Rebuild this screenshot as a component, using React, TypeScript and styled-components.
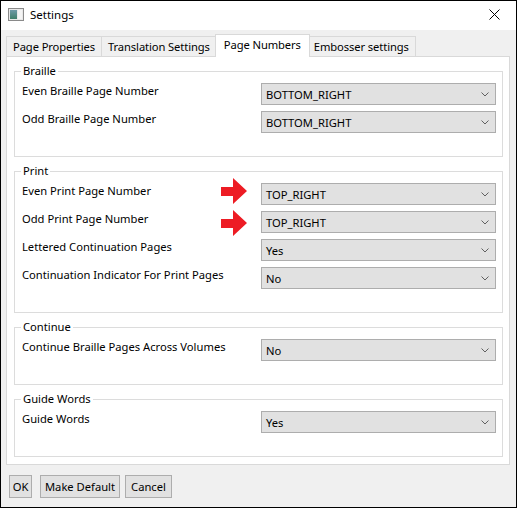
import React from 'react';
import styled, { createGlobalStyle } from 'styled-components';

const GlobalStyle = createGlobalStyle`
  html, body { margin: 0; padding: 0; background: #ffffff; }
  * { box-sizing: border-box; }
  body { font-family: "Segoe UI", "Noto Sans", "Open Sans", sans-serif; font-size: 11.2px; color: #000; }
`;

type Row = { label: string; value: string; arrow?: number };
type Group = { title: string; rows: Row[] };

const GROUPS: Group[] = [
  {
    title: 'Braille',
    rows: [
      { label: 'Even Braille Page Number', value: 'BOTTOM_RIGHT' },
      { label: 'Odd Braille Page Number', value: 'BOTTOM_RIGHT' },
    ],
  },
  {
    title: 'Print',
    rows: [
      { label: 'Even Print Page Number', value: 'TOP_RIGHT', arrow: -5 },
      { label: 'Odd Print Page Number', value: 'TOP_RIGHT', arrow: -1 },
      { label: 'Lettered Continuation Pages', value: 'Yes' },
      { label: 'Continuation Indicator For Print Pages', value: 'No' },
    ],
  },
  {
    title: 'Continue',
    rows: [{ label: 'Continue Braille Pages Across Volumes', value: 'No' }],
  },
  {
    title: 'Guide Words',
    rows: [{ label: 'Guide Words', value: 'Yes' }],
  },
];

const TABS = ['Page Properties', 'Translation Settings', 'Page Numbers', 'Embosser settings'];

const AppIcon = () => (
  <svg width="16" height="13" viewBox="0 0 16 13">
    <defs>
      <linearGradient id="ic" x1="0" y1="0" x2="0" y2="1">
        <stop offset="0" stopColor="#6f9aa8" />
        <stop offset="1" stopColor="#3f7f6a" />
      </linearGradient>
    </defs>
    <rect x="0.5" y="0.5" width="15" height="12" fill="#e8e8e8" stroke="#8a8a8a" />
    <rect x="2" y="2" width="7" height="9" fill="url(#ic)" />
    <rect x="10" y="2" width="4" height="9" fill="#f4f4f4" />
  </svg>
);

const CloseIcon = () => (
  <svg width="11" height="11" viewBox="0 0 11 11">
    <path d="M0.5 0.5 L10.5 10.5 M10.5 0.5 L0.5 10.5" stroke="#000" strokeWidth="1" fill="none" />
  </svg>
);

const Chevron = () => (
  <svg width="8" height="5" viewBox="0 0 8 5">
    <path d="M0.5 0.5 L4 4 L7.5 0.5" stroke="#606060" strokeWidth="1" fill="none" />
  </svg>
);

const RedArrow = () => (
  <svg width="26" height="26" viewBox="0 0 26 26">
    <polygon points="0,9 12,9 12,0 26,13 12,26 12,18 0,18" fill="#ed1c24" />
  </svg>
);

const App = () => {
  return (
    <>
      <GlobalStyle />
      <Window>
        <TitleBar>
          <AppIcon />
          <Title>Settings</Title>
          <CloseButton>
            <CloseIcon />
          </CloseButton>
        </TitleBar>
        <Body>
          <TabStrip>
            {TABS.map((t) => (
              <Tab key={t} $active={t === 'Page Numbers'}>{t}</Tab>
            ))}
          </TabStrip>
          <Pane>
            {GROUPS.map((g) => (
              <GroupBox key={g.title}>
                <Legend>{g.title}</Legend>
                <RowList>
                  {g.rows.map((r) => (
                    <FieldRow key={r.label}>
                      <Label>{r.label}</Label>
                      <ComboWrap>
                        {r.arrow !== undefined && (
                          <ArrowMark $dy={r.arrow}>
                            <RedArrow />
                          </ArrowMark>
                        )}
                        <Combo>
                          <span>{r.value}</span>
                          <Chevron />
                        </Combo>
                      </ComboWrap>
                    </FieldRow>
                  ))}
                </RowList>
              </GroupBox>
            ))}
          </Pane>
          <Footer>
            <Button $w={23}>OK</Button>
            <Button $w={80} $ml={8}>Make Default</Button>
            <Button $w={47} $ml={5}>Cancel</Button>
          </Footer>
        </Body>
      </Window>
    </>
  );
};

const Window = styled.div`
  width: 517px;
  height: 508px;
  border: 1px solid #000;
  background: #f0f0f0;
  display: flex;
  flex-direction: column;
`;

const TitleBar = styled.div`
  height: 29px;
  flex: none;
  background: #fff;
  display: flex;
  align-items: center;
  padding: 0 0 3px 7px;
`;

const Title = styled.span`
  margin-left: 6px;
  font-size: 11.5px;
`;

const CloseButton = styled.div`
  margin-left: auto;
  width: 46px;
  display: flex;
  justify-content: center;
  padding-left: 2px;
`;

const Body = styled.div`
  flex: 1;
  min-height: 0;
  display: flex;
  flex-direction: column;
  padding: 4px 6px 9px 5px;
`;

const TabStrip = styled.div`
  height: 22px;
  flex: none;
  display: flex;
  align-items: flex-end;
`;

const Tab = styled.div<{ $active?: boolean }>`
  position: relative;
  height: ${(p) => (p.$active ? '23px' : '20px')};
  margin: ${(p) => (p.$active ? '0 -2px -1px -2px' : '0')};
  padding: ${(p) => (p.$active ? '1px 8px 0 8px' : '0 6px')};
  z-index: ${(p) => (p.$active ? 1 : 0)};
  background: ${(p) => (p.$active ? '#fff' : '#f0f0f0')};
  border: 1px solid #d9d9d9;
  border-bottom: none;
  border-left-width: ${(p) => (p.$active ? '1px' : '0')};
  &:first-child { border-left-width: 1px; }
  display: flex;
  align-items: ${(p) => (p.$active ? 'flex-start' : 'center')};
  white-space: nowrap;
  line-height: 18px;
  letter-spacing: -0.1px;
`;

const Pane = styled.div`
  flex: 1;
  min-height: 0;
  overflow: hidden;
  background: #fff;
  border: 1px solid #d9d9d9;
  padding: 6px 6px 0 7px;
  display: flex;
  flex-direction: column;
  gap: 6px;
`;

const GroupBox = styled.fieldset`
  margin: 0;
  min-width: 0;
  border: 1px solid #dcdcdc;
  padding: 0 6px 23px 7px;
`;

const Legend = styled.legend`
  margin-left: -1px;
  padding: 0 2px;
  line-height: 16px;
  height: 16px;
`;

const RowList = styled.div`
  display: flex;
  flex-direction: column;
  gap: 6px;
  padding-top: 4px;
`;

const FieldRow = styled.div`
  display: grid;
  grid-template-columns: 1fr 235px;
  align-items: start;
`;

const Label = styled.div`
  line-height: 16px;
  white-space: nowrap;
`;

const ComboWrap = styled.div`
  position: relative;
`;

const ArrowMark = styled.div<{ $dy: number }>`
  position: absolute;
  left: -40px;
  top: ${(p) => p.$dy}px;
  width: 26px;
  height: 26px;
  display: flex;
`;

const Combo = styled.div`
  height: 22px;
  background: #e1e1e1;
  border: 1px solid #adadad;
  display: flex;
  align-items: center;
  justify-content: space-between;
  padding: 0 6px 0 4px;
`;

const Footer = styled.div`
  flex: none;
  display: flex;
  padding: 10px 0 0 3px;
`;

const Button = styled.div<{ $w: number; $ml?: number }>`
  width: ${(p) => p.$w}px;
  margin-left: ${(p) => p.$ml ?? 0}px;
  height: 23px;
  background: #e1e1e1;
  border: 1px solid #adadad;
  display: flex;
  align-items: center;
  justify-content: center;
  white-space: nowrap;
`;

export default App;
